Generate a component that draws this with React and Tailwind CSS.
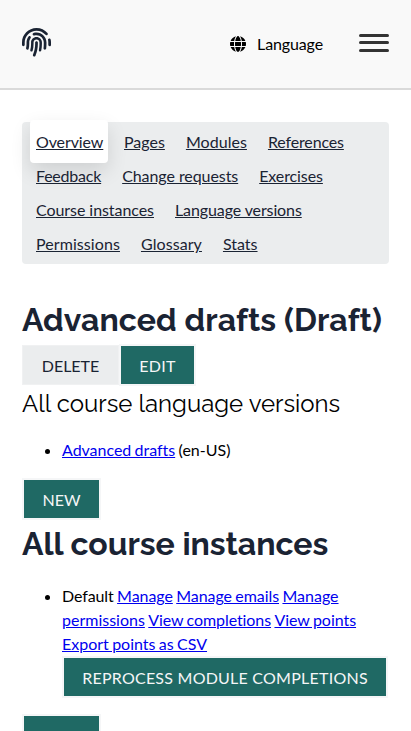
import { FaFingerprint, FaGlobe } from "react-icons/fa6";

const rows = [
  [["Pages", ""], ["Modules", "tracking-[0.05px]"], ["References", "tracking-[-0.15px]"]],
  [["Feedback", "tracking-[-0.22px]"], ["Change requests", "tracking-[-0.07px]"], ["Exercises", "tracking-[-0.1px]"]],
  [["Course instances", "tracking-[-0.06px]"], ["Language versions", "tracking-[-0.11px]"]],
  [["Permissions", "tracking-[0.08px]"], ["Glossary", "tracking-[0.08px]"], ["Stats", ""]],
];

function Link({ children, className = "" }) {
  return <a href="#" className={`text-[#0000ee] underline ${className}`}>{children}</a>;
}

function Primary({ children, className = "" }) {
  return (
    <button className={`block h-[42px] whitespace-nowrap border-2 border-[#f5f6f7] bg-[#1f6964] pt-px text-center text-[16px] leading-[38px] text-[#f5f6f7] ${className}`}>
      {children}
    </button>
  );
}

export default function App() {
  return (
    <div className="h-[731px] w-full overflow-hidden bg-white font-['Lato',sans-serif] text-[16px] leading-6 text-black">
      <header className="flex h-[90px] items-center border-b-2 border-[#dadada] bg-[#f9f9f9] px-[22px]">
        <FaFingerprint className="mb-1 h-[29px] w-[29px] text-[#1a2333]" />
        <div className="ml-auto flex items-center">
          <FaGlobe className="h-4 w-4" />
          <span className="ml-[11px] tracking-[-0.12px]">Language</span>
        </div>
        <div className="ml-9 flex w-[30px] flex-col pb-[3px]">
          <span className="h-[3px] rounded-sm bg-[#333]" />
          <span className="mt-1 h-[3px] rounded-sm bg-[#333]" />
          <span className="mt-[5px] h-[3px] rounded-sm bg-[#333]" />
        </div>
      </header>
      <main className="px-[22px] pt-8">
        <nav className="h-[142px] rounded-[4px] bg-[#ebedee] pl-[14px] pt-[3px] text-[#1a2333]">
          {rows.map((row, i) => (
            <div key={i} className="flex h-[34px] items-center gap-[21px] whitespace-nowrap">
              {i === 0 && (
                <a href="#" className="-ml-[6px] -mr-[5px] -mt-px flex h-[43px] w-[78px] items-center rounded-[4px] bg-white pl-[6px] pt-px tracking-[-0.1px] underline shadow-[0_8px_20px_rgba(0,0,0,0.12)]">
                  Overview
                </a>
              )}
              {row.map(([text, tracking]) => <a key={text} href="#" className={`underline ${tracking}`}>{text}</a>)}
            </div>
          ))}
        </nav>
        <h1 className="mt-9 whitespace-nowrap font-['Raleway',sans-serif] text-[32px] font-bold leading-10 tracking-[0.08px] text-[#1a2333]">Advanced drafts (Draft)</h1>
        <div className="mt-1 flex h-[42px] items-center">
          <button className="h-10 w-[97px] border border-[#f0f1f2] bg-[#ebedee] pt-px text-[16px] text-[#1a2333]">DELETE</button>
          <Primary className="w-[77px] tracking-[0.32px]">EDIT</Primary>
        </div>
        <h2 className="whitespace-nowrap font-['Raleway',sans-serif] text-[24px] leading-9">All course language versions</h2>
        <ul className="mt-4 list-disc pl-10 [word-spacing:-0.7px]">
          <li><Link className="tracking-[-0.03px]">Advanced drafts</Link> (en-US)</li>
        </ul>
        <div className="mt-4"><Primary className="w-[79px]">NEW</Primary></div>
        <h2 className="mt-1 whitespace-nowrap font-['Raleway',sans-serif] text-[32px] font-bold leading-10 tracking-[-0.02px] text-[#1a2333]">All course instances</h2>
        <ul className="mt-5 list-disc pl-10 [word-spacing:-0.7px]">
          <li>
            <span className="tracking-[-0.1px]">Default</span> <Link className="tracking-[-0.06px]">Manage</Link>{" "}
            <Link className="tracking-[-0.06px]">Manage emails</Link> <Link>Manage permissions</Link>{" "}
            <Link className="tracking-[-0.08px]">View completions</Link>{" "}
            <Link className="tracking-[-0.04px]">View points</Link>{" "}
            <Link className="tracking-[-0.01px]">Export points as CSV</Link>
            <Primary className="w-[326px] tracking-[0.24px]">REPROCESS MODULE COMPLETIONS</Primary>
          </li>
        </ul>
        <div className="mt-4"><Primary className="w-[79px]">NEW</Primary></div>
      </main>
    </div>
  );
}
